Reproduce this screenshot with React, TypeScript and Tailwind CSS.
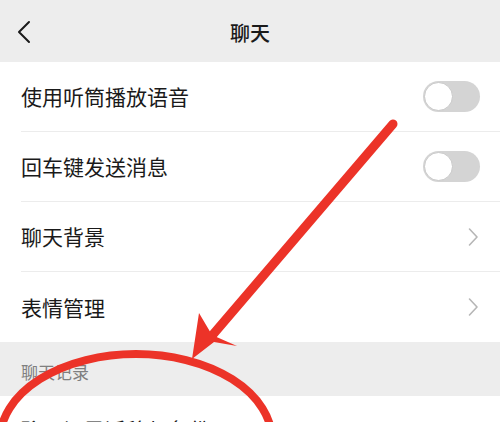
import React from "react";

function Toggle() {
  return (
    <div className="relative w-[57px] h-[31px] rounded-full bg-[#d4d4d4]">
      <div className="absolute left-[1px] top-[1px] w-[29px] h-[29px] rounded-full bg-white border border-[#c8c8c8]" />
    </div>
  );
}

function Chevron() {
  return (
    <svg width="12" height="20" viewBox="0 0 12 20" className="mr-[1px]">
      <path d="M2.5 2 L10 10 L2.5 18" fill="none" stroke="#b6b6b6" strokeWidth="1.6" strokeLinecap="round" strokeLinejoin="round" />
    </svg>
  );
}

function Row({ label, right, divider = true }: { label: string; right?: React.ReactNode; divider?: boolean }) {
  return (
    <div className="bg-white pl-[21px]">
      <div className={`h-[70px] flex items-center justify-between pr-[20px] ${divider ? "border-b border-[#ececec]" : ""}`}>
        <span className="text-[21px] text-[#1a1a1a] leading-none">{label}</span>
        {right}
      </div>
    </div>
  );
}

export default function App() {
  return (
    <div
      className="relative w-[500px] h-[422px] overflow-hidden bg-[#ededed]"
      style={{ fontFamily: '"Noto Sans CJK SC", "Noto Sans", sans-serif' }}
    >
      <div className="h-[62px] flex items-center justify-center relative bg-[#ededed]">
        <svg width="16" height="24" viewBox="0 0 16 24" className="absolute left-[16px] top-[20px]">
          <path d="M13 2 L3 12 L13 22" fill="none" stroke="#1a1a1a" strokeWidth="2" strokeLinecap="round" strokeLinejoin="round" />
        </svg>
        <span className="text-[20px] font-medium text-[#1a1a1a] leading-none mt-[4px]">聊天</span>
      </div>
      <Row label="使用听筒播放语音" right={<Toggle />} />
      <Row label="回车键发送消息" right={<Toggle />} />
      <Row label="聊天背景" right={<Chevron />} />
      <Row label="表情管理" right={<Chevron />} divider={false} />
      <div className="h-[54px] flex items-center pl-[21px] pt-[4px]">
        <span className="text-[17px] text-[#7f7f7f] leading-none">聊天记录</span>
      </div>
      <div className="bg-white pl-[21px]">
        <div className="h-[70px] flex items-start pt-[23px]">
          <span className="text-[21px] text-[#1a1a1a] leading-none">聊天记录迁移与备份</span>
        </div>
      </div>

      <svg className="absolute inset-0 pointer-events-none" width="500" height="422" viewBox="0 0 500 422">
        <line x1="393" y1="124" x2="210" y2="338" stroke="#ec3328" strokeWidth="9" strokeLinecap="round" />
        <polygon points="192,359 199,313 212,335 237,346 214,342" fill="#ec3328" />
        <ellipse cx="136" cy="440" rx="136" ry="86" fill="none" stroke="#ec3328" strokeWidth="8" />
      </svg>
    </div>
  );
}
